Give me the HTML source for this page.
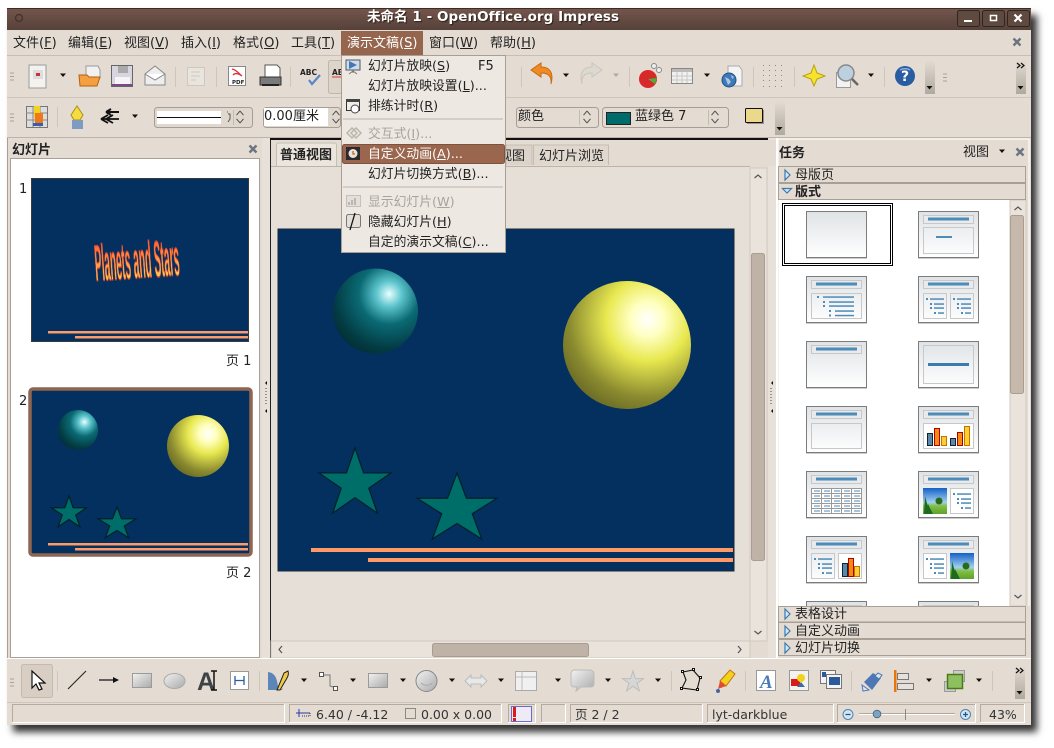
<!DOCTYPE html>
<html><head><meta charset="utf-8"><style>
html,body{margin:0;padding:0;background:#fff;width:1054px;height:748px;overflow:hidden}
#w{position:absolute;left:7px;top:8px;width:1024px;height:717px;box-shadow:6px 7px 7px rgba(0,0,0,.8)}
svg{position:absolute;left:0;top:0}
.t{position:absolute;white-space:nowrap;font:13px/16px "DejaVu Sans","WenQuanYi Zen Hei","Noto Sans CJK SC",sans-serif;color:#222;margin-top:2px}
.b{font-weight:bold}.g{color:#aaa39a}.s{font-size:12.5px;color:#333;margin-top:1px}
</style></head><body><div id="w"></div>
<svg width="1054" height="748" viewBox="0 0 1054 748">
<defs>
<linearGradient id="tb" x1="0" y1="0" x2="0" y2="1"><stop offset="0" stop-color="#74544a"/><stop offset="1" stop-color="#55423a"/></linearGradient>
<linearGradient id="bar" x1="0" y1="0" x2="0" y2="1"><stop offset="0" stop-color="#e4dcd3"/><stop offset="1" stop-color="#b0a9a0"/></linearGradient>
<linearGradient id="th" x1="0" y1="0" x2="0" y2="1"><stop offset="0" stop-color="#dfe3e6"/><stop offset=".65" stop-color="#f4f5f6"/><stop offset="1" stop-color="#fff"/></linearGradient>
<linearGradient id="gr" x1="0" y1="0" x2="1" y2="1"><stop offset="0" stop-color="#f2f2f2"/><stop offset="1" stop-color="#aaa"/></linearGradient>
<linearGradient id="pl" x1="0" y1="0" x2="0" y2="1"><stop offset="0" stop-color="#ff4a30"/><stop offset="1" stop-color="#ffe860"/></linearGradient>
<linearGradient id="sky" x1="0" y1="0" x2="0" y2="1"><stop offset="0" stop-color="#1560c8"/><stop offset=".55" stop-color="#a0d0f0"/><stop offset=".7" stop-color="#80c040"/><stop offset="1" stop-color="#60a030"/></linearGradient>
<radialGradient id="s1" cx=".66" cy=".3" r=".85"><stop offset="0" stop-color="#e8ffff"/><stop offset=".18" stop-color="#5cc4cc"/><stop offset=".42" stop-color="#0a6a74"/><stop offset=".75" stop-color="#033c44"/><stop offset="1" stop-color="#02282c"/></radialGradient>
<radialGradient id="s2" cx=".66" cy=".3" r=".85"><stop offset="0" stop-color="#fff"/><stop offset=".16" stop-color="#ffffc0"/><stop offset=".38" stop-color="#e8e850"/><stop offset=".72" stop-color="#8a8a30"/><stop offset="1" stop-color="#5a5a20"/></radialGradient>
<polygon id="star" points="0,-1 .2245,-.309 .951,-.309 .363,.118 .588,.809 0,.382 -.588,.809 -.363,.118 -.951,-.309 -.2245,-.309" fill="#006e68" stroke="#02202a" stroke-width="1.2" vector-effect="non-scaling-stroke"/>
<g id="base"><rect x="0" y="47" width="61" height="1" fill="#ccc"/><rect x=".5" y=".5" width="60" height="46" fill="url(#th)" stroke="#7c7c7c"/></g>
<g id="ti"><use href="#base"/><rect x="5.5" y="4.5" width="50" height="8" fill="#e8eaec" stroke="#c8c8c8"/><rect x="10" y="6.5" width="41" height="3" fill="#4d8bb8"/></g>
<g id="lst" fill="#4d8bb8"><rect x="0" y="0" width="2" height="2"/><rect x="4" y=".3" width="14" height="1.5"/><rect x="4" y="5" width="2" height="2"/><rect x="8" y="5.3" width="10" height="1.5"/><rect x="4" y="9" width="2" height="2"/><rect x="8" y="9.300" width="10" height="1.5"/><rect x="8" y="14" width="2" height="2"/><rect x="12" y="14.300" width="6" height="1.5"/></g>
<g id="ch"><rect x=".5" y="5.5" width="5" height="13" fill="#5b88a8" stroke="#123"/><rect x="6.5" y=".5" width="5" height="18" fill="#f58a10" stroke="#a00"/><rect x="12.500" y="8.500" width="5" height="10" fill="#fc3" stroke="#b70"/></g>
<g id="pic"><rect width="24" height="26" fill="url(#sky)"/><circle cx="16" cy="13" r="3.5" fill="#2a6a18"/><path d="M2 8L7 26H1zM5 16l5 10H3z" fill="#1d6a22"/></g>
<g id="x"><path d="M-3.5-3.5L3.5 3.5M3.5-3.5L-3.5 3.5" stroke="#6c7480" stroke-width="2.4" fill="none"/></g>
<path id="dd" d="M-3-1.5H3L0 2z" fill="#111"/>
<path id="ud" d="M-3-1.5H3L0 2z" fill="#aaa"/>
<g id="sp"><path d="M0-6L3.500-1.800M0-6L-3.500-1.800M0 6L3.500 1.800M0 6L-3.500 1.800" stroke="#555" fill="none"/></g>
<g id="grip"><path d="M0 0h4M0 3.500h4M0 7h4" stroke="#aaa198"/></g>
<g id="tri"><path d="M0 0L5 5L0 10z" fill="#d6e8f5" stroke="#3d79ad" stroke-width="1.200"/></g>
</defs>

<!-- window -->
<rect x="7" y="8" width="1024" height="717" fill="#e4dcd3"/>
<rect x="7" y="8" width="1024" height="1" fill="#3a2c26"/>
<rect x="7" y="9" width="1024" height="21" fill="url(#tb)"/>
<circle cx="19" cy="18" r="3.500" fill="none" stroke="#3f322c" stroke-width="1.200"/>
<g><rect x="957.500" y="10.500" width="22" height="16" rx="2" fill="#5f4a40" stroke="#2f2520"/><rect x="982.500" y="10.500" width="22" height="16" rx="2" fill="#5f4a40" stroke="#2f2520"/><rect x="1007.500" y="10.500" width="22" height="16" rx="2" fill="#5f4a40" stroke="#2f2520"/></g>
<rect x="964" y="20" width="8" height="2" fill="#fff"/>
<rect x="990.500" y="15.500" width="6" height="5" fill="none" stroke="#fff" stroke-width="1.500"/>
<path d="M1014.500 14.500l7 7M1021.500 14.500l-7 7" stroke="#fff" stroke-width="2.200"/>
<rect x="7" y="55" width="1024" height="1" fill="#c8bfb4"/>
<rect x="7" y="97" width="1024" height="1" fill="#cfc6bb"/>
<rect x="7" y="137" width="1024" height="1" fill="#bdb4a9"/>
<use href="#x" x="1017" y="42"/>
<rect x="341" y="31" width="82" height="24" fill="#96654d"/>

<!-- toolbar 1 -->
<use href="#grip" x="10" y="73"/>
<rect x="29" y="65" width="17" height="23" fill="#f4f2ef" stroke="#9a9a9a"/><rect x="33" y="70" width="10" height="9" fill="#ddd"/><rect x="36" y="73" width="4" height="3" fill="#c33"/>
<use href="#dd" x="63" y="75"/>
<path d="M86 66h12l2 4v8H86z" fill="#f2f2f2" stroke="#999"/><path d="M79 75h8l2 2h11l-3 9H80z" fill="#f5a040" stroke="#b4600c"/>
<rect x="111.500" y="65.500" width="21" height="21" fill="#d8d4e0" stroke="#666"/><rect x="118" y="66" width="10" height="7" fill="#aaa"/><rect x="115" y="77" width="15" height="7" fill="#f6f4f6"/><rect x="112" y="84" width="20" height="2" fill="#7a4a88"/>
<path d="M145 74l10-8 10 8v11h-20z" fill="#eee" stroke="#888"/><path d="M145 74l10 6 10-6" fill="#fff" stroke="#888"/>
<rect x="175" y="67" width="1" height="20" fill="#cfc6bb"/>
<rect x="187.500" y="67.500" width="17" height="18" fill="#e8e4de" stroke="#cfc8be"/><path d="M191 72h9M191 76h9M191 80h5" stroke="#cfc8be"/>
<rect x="216" y="67" width="1" height="20" fill="#cfc6bb"/>
<rect x="228.500" y="66.500" width="17" height="19" fill="#fff" stroke="#888"/><path d="M232 69c5 1 7 5 10 7c-4-3-7-3-9-1" fill="none" stroke="#d33" stroke-width="1.300"/>
<text x="232" y="84" style="font:bold 5.500px 'DejaVu Sans',sans-serif" fill="#222">PDF</text>
<path d="M265 65h12l3 3v9h-15z" fill="#fff" stroke="#555"/><path d="M260 77h21v8h-21z" fill="#7a7a7a" stroke="#333"/><rect x="262" y="84" width="17" height="2" fill="#222"/>
<rect x="290" y="67" width="1" height="20" fill="#cfc6bb"/>
<text x="300" y="75" style="font:bold 7.500px 'DejaVu Sans',sans-serif" fill="#222">ABC</text><path d="M309 80l3 4 8-9" fill="none" stroke="#5a86c6" stroke-width="2.200"/>
<rect x="328.500" y="60.500" width="20" height="33" rx="2" fill="#ddd4ca" stroke="#c0b6aa"/>
<text x="332" y="75" style="font:bold 7.500px 'DejaVu Sans',sans-serif" fill="#222">AB</text><path d="M332 77h9" stroke="#d33"/>
<rect x="521" y="67" width="1" height="20" fill="#cfc6bb"/>
<path d="M551 84c1-8-3-11-10-11v4l-10-7 10-7v4c9 0 13 6 10 17z" fill="#f08a24" stroke="#c86a10"/>
<use href="#dd" x="566" y="75"/>
<path d="M582 84c-1-8 3-11 10-11v4l10-7-10-7v4c-9 0-13 6-10 17z" fill="#dcd8d2" stroke="#cbc5bd"/>
<use href="#ud" x="616" y="75"/>
<rect x="629" y="67" width="1" height="20" fill="#cfc6bb"/>
<circle cx="648" cy="79" r="9" fill="#d9282a"/><path d="M648 79l9-1 -2 6z" fill="#4cb034"/><circle cx="654" cy="66" r="2.500" fill="#eee" stroke="#888"/><circle cx="659" cy="70" r="2.500" fill="#eee" stroke="#888"/>
<rect x="671.500" y="68.500" width="21" height="15" fill="#f3f1ee" stroke="#888"/><rect x="672" y="69" width="20" height="3" fill="#bbb"/><path d="M672 76h20M672 80h20M677 72v11M682 72v11M687 72v11" stroke="#c8c8c8"/>
<use href="#dd" x="707" y="75"/>
<path d="M728 66h11l3 4v16h-14z" fill="#f4f4f4" stroke="#aaa"/><circle cx="729" cy="80" r="7" fill="#3f79b8" stroke="#254f85"/><path d="M725 77l4 2 2 3-3 3zM731 75l3 2-2 2z" fill="#a8c8e4"/>
<rect x="753" y="67" width="1" height="20" fill="#cfc6bb"/>
<g fill="#8a8a8a"><rect x="763" y="65" width="1" height="1"/><rect x="769" y="65" width="1" height="1"/><rect x="775" y="65" width="1" height="1"/><rect x="781" y="65" width="1" height="1"/><rect x="763" y="70" width="1" height="1"/><rect x="769" y="70" width="1" height="1"/><rect x="775" y="70" width="1" height="1"/><rect x="781" y="70" width="1" height="1"/><rect x="763" y="75" width="1" height="1"/><rect x="769" y="75" width="1" height="1"/><rect x="775" y="75" width="1" height="1"/><rect x="781" y="75" width="1" height="1"/><rect x="763" y="80" width="1" height="1"/><rect x="769" y="80" width="1" height="1"/><rect x="775" y="80" width="1" height="1"/><rect x="781" y="80" width="1" height="1"/><rect x="763" y="86" width="1" height="1"/><rect x="769" y="86" width="1" height="1"/><rect x="775" y="86" width="1" height="1"/><rect x="781" y="86" width="1" height="1"/></g>
<rect x="794" y="67" width="1" height="20" fill="#cfc6bb"/>
<path d="M814 65l3 8 8 3-8 3-3 7-3-7-8-3 8-3z" fill="#f6e32c" stroke="#b8a010"/>
<rect x="836.500" y="72.500" width="14" height="15" fill="#f2f2f2" stroke="#999"/><circle cx="846" cy="73" r="8" fill="#bcd0e0" stroke="#888" stroke-width="1.500"/><path d="M852 79l6 6" stroke="#666" stroke-width="2.500"/>
<use href="#dd" x="871" y="75"/>
<rect x="884" y="67" width="1" height="20" fill="#cfc6bb"/>
<circle cx="905" cy="76" r="10" fill="#2a5ca2"/><path d="M900 70a8 6 0 0 1 10 0" stroke="#8fb0d8" fill="none" stroke-width="1.500"/>
<text x="901" y="81" style="font:bold 14px 'DejaVu Sans',sans-serif" fill="#fff">?</text>
<rect x="925" y="60" width="10" height="34" fill="url(#bar)"/><use href="#dd" x="929.500" y="87.500"/>
<use href="#grip" x="943" y="74"/>
<rect x="1016" y="60" width="10" height="34" fill="url(#bar)"/><use href="#dd" x="1020.500" y="87.500"/>
<path d="M1017 63l3 2.500-3 2.500M1021 63l3 2.500-3 2.500" stroke="#111" fill="none" stroke-width="1.200"/>

<!-- toolbar 2 -->
<use href="#grip" x="10" y="114"/>
<rect x="26.500" y="106.500" width="21" height="21" fill="#ddd" stroke="#777"/><path d="M33 106v21M40 106v21M26 113h21M26 120h21" stroke="#888"/><rect x="34" y="106" width="6" height="12" fill="#f3d21c"/><path d="M35 113h8v10h-8z" fill="#f07818"/><rect x="33" y="123" width="10" height="3" fill="#3a5fa8"/>
<rect x="57" y="107" width="1" height="20" fill="#cfc6bb"/>
<path d="M77 106l6 9-3 5h-6l-3-5z" fill="#f5dc40" stroke="#aa9010"/><rect x="72" y="120" width="11" height="9" fill="#7d9cc0"/>
<path d="M119 112h-13M106 112l5-3M106 112l5 3" stroke="#111" stroke-width="2" fill="none"/><path d="M101 119h18M101 119l7-4M101 119l7 4M106 119l7-4M106 119l7 4" stroke="#111" stroke-width="1.800" fill="none"/>
<use href="#dd" x="135" y="116"/>
<rect x="154.500" y="107.500" width="98" height="20" rx="3" fill="#e0d8ce" stroke="#a69e94"/><rect x="157" y="111" width="64" height="13" fill="#fff"/><rect x="157" y="117" width="64" height="1" fill="#111"/><path d="M233.500 110v15" stroke="#c4bbb0"/><path d="M228 114h2v5l-2 3M227 112h1" stroke="#555" fill="none"/><use href="#sp" x="240" y="117"/>
<rect x="263.500" y="107.500" width="77" height="20" rx="3" fill="#e0d8ce" stroke="#a69e94"/><rect x="264" y="108" width="64" height="18" fill="#fff"/><use href="#sp" x="336" y="117"/>
<rect x="516.500" y="107.500" width="82" height="20" rx="3" fill="#e4dcd3" stroke="#a69e94"/><path d="M579.500 110v15" stroke="#c4bbb0"/><use href="#sp" x="587" y="117"/>
<rect x="602.500" y="107.500" width="126" height="20" rx="3" fill="#e4dcd3" stroke="#a69e94"/><rect x="606.500" y="112.500" width="24" height="12" fill="#006b6b" stroke="#222"/><path d="M708.500 110v15" stroke="#c4bbb0"/><use href="#sp" x="715" y="117"/>
<rect x="747" y="110" width="17" height="14" fill="#9a9188"/><rect x="745.500" y="108.500" width="17" height="14" rx="1" fill="#ecd88a" stroke="#111"/>
<rect x="775" y="101" width="10" height="34" fill="url(#bar)"/><use href="#dd" x="779.500" y="128.500"/>

<!-- main bg -->
<rect x="8" y="138" width="1022" height="520" fill="#e4dcd3"/>
<rect x="10.500" y="158.500" width="249" height="499" fill="#fff" stroke="#a8a096"/>
<use href="#x" x="253" y="149"/>
<rect x="7" y="138" width="1" height="520" fill="#a8a096"/>
<rect x="263" y="138" width="1" height="520" fill="#a8a096"/>
<rect x="262" y="138" width="8" height="520" fill="#e8e1d9"/>
<rect x="270" y="138" width="1" height="520" fill="#222"/>
<rect x="270" y="138" width="507" height="2" fill="#111"/>
<path d="M265 383l2-2v4zM265 411l2-2v4z" fill="#111"/><path d="M266 388v18" stroke="#444" stroke-dasharray="1 2"/>
<rect x="776" y="138" width="2" height="520" fill="#fff"/>
<rect x="768" y="138" width="8" height="520" fill="#e8e1d9"/>
<path d="M771 383l2-2v4zM771 411l2-2v4z" fill="#111"/><path d="M771 388v18" stroke="#444" stroke-dasharray="1 2"/>

<!-- thumbs -->
<rect x="31.500" y="178.500" width="217" height="163" fill="#03305f" stroke="#3b3b3b"/>
<rect x="48" y="331" width="200" height="2.500" fill="#ff9966"/><rect x="75" y="336" width="173" height="2.500" fill="#ff9966"/>
<text transform="translate(96,281) rotate(-4) scale(.315,1.600)" style="font:bold 32px 'Liberation Sans',sans-serif" fill="url(#pl)" stroke="#d8402a" stroke-width=".9">Planets and Stars</text>
<rect x="30" y="389" width="221" height="166" rx="3" fill="#03305f" stroke="#8f6552" stroke-width="3.500"/>
<circle cx="78" cy="430" r="20" fill="url(#s1)"/><circle cx="198" cy="446" r="31" fill="url(#s2)"/>
<use href="#star" transform="translate(69,513) scale(18.500,17)"/><use href="#star" transform="translate(117,524) scale(20,17)"/>
<rect x="48" y="543" width="200" height="2.500" fill="#ff9966"/><rect x="75" y="548" width="173" height="2.500" fill="#ff9966"/>

<!-- tabs / editing -->
<rect x="271" y="140" width="505" height="26" fill="#e4dcd3"/>
<rect x="271" y="166" width="479" height="1" fill="#bdb4a9"/>
<path d="M276.500 166V145a2 2 0 0 1 2-2h56a2 2 0 0 1 2 2v21" fill="#ebe5de" stroke="#c6bdb2"/>
<path d="M506 165V145h26v20" fill="#dcd4ca" stroke="#c6bdb2"/><path d="M533.500 165V145h75v20" fill="#e0d8ce" stroke="#c6bdb2"/>
<rect x="271" y="167" width="479" height="474" fill="#e6dfd7"/>
<rect x="278" y="229" width="456" height="342" fill="#03305f" stroke="#1a2a3a"/>
<circle cx="375.500" cy="311" r="42.500" fill="url(#s1)"/>
<circle cx="627" cy="345" r="64" fill="url(#s2)"/>
<use href="#star" transform="translate(355,484) scale(38,36)"/><use href="#star" transform="translate(457,509.500) scale(42,36.500)"/>
<rect x="311" y="548" width="422" height="4" fill="#ff9966"/><rect x="368" y="558" width="365" height="4" fill="#ff9966"/>
<!-- scrollbars -->
<rect x="750" y="168" width="17" height="473" fill="#e9e3dc" stroke="#d2cac0"/>
<path d="M754.500 178l3.500-3 3.500 3M754.500 631l3.500 3 3.500-3" stroke="#555" fill="none" stroke-width="1.200"/>
<rect x="751.500" y="253.500" width="13" height="307" rx="2" fill="#bfb2a6" stroke="#aa9d90"/>
<rect x="271" y="641" width="479" height="17" fill="#e9e3dc" stroke="#d2cac0"/>
<path d="M282 646l-3 3.500 3 3.500M738 646l3 3.500-3 3.500" stroke="#555" fill="none" stroke-width="1.200"/>
<rect x="432.500" y="643.500" width="156" height="13" rx="2" fill="#bfb2a6" stroke="#aa9d90"/>

<!-- task panel -->
<rect x="778" y="139" width="251" height="519" fill="#e4dcd3" stroke="#fff"/>
<use href="#dd" x="1002" y="151"/><use href="#x" x="1020" y="152"/>
<rect x="779" y="200" width="232" height="406" fill="#fff"/>
<use href="#base" x="806" y="211"/>
<rect x="782.500" y="203.500" width="110" height="62" fill="none" stroke="#000"/><rect x="784.500" y="205.500" width="106" height="58" fill="none" stroke="#000"/>
<g transform="translate(918,211)"><use href="#ti"/><rect x="5.500" y="16.500" width="50" height="26" fill="none" stroke="#c8c8c8"/><rect x="18" y="25" width="16" height="2" fill="#4d8bb8"/></g>
<g transform="translate(806,276)"><use href="#ti"/><rect x="5.500" y="17.500" width="50" height="25" fill="none" stroke="#c8c8c8"/><g fill="#4d8bb8"><rect x="11" y="20" width="2" height="2"/><rect x="17" y="20.300" width="31" height="1.500"/><rect x="17" y="25" width="2" height="2"/><rect x="23" y="25.300" width="25" height="1.500"/><rect x="17" y="29" width="2" height="2"/><rect x="23" y="29.300" width="25" height="1.500"/><rect x="23" y="34" width="2" height="2"/><rect x="29" y="34.300" width="19" height="1.500"/><rect x="23" y="38.500" width="2" height="2"/><rect x="29" y="38.800" width="19" height="1.500"/></g></g>
<g transform="translate(918,276)"><use href="#ti"/><rect x="5.500" y="17.500" width="23" height="25" fill="none" stroke="#c8c8c8"/><rect x="32.500" y="17.500" width="23" height="25" fill="none" stroke="#c8c8c8"/><use href="#lst" x="8" y="22"/><use href="#lst" x="35" y="22"/></g>
<use href="#ti" x="806" y="341"/>
<g transform="translate(918,341)"><use href="#base"/><rect x="5.500" y="4.500" width="50" height="38" fill="none" stroke="#c8c8c8"/><rect x="10" y="22" width="41" height="3" fill="#3a7cae"/></g>
<g transform="translate(806,406)"><use href="#ti"/><rect x="5.500" y="17.500" width="50" height="25" fill="none" stroke="#c8c8c8"/></g>
<g transform="translate(918,406)"><use href="#ti"/><rect x="5.500" y="17.500" width="50" height="25" fill="#fff" stroke="#c8c8c8"/>
<rect x="9.500" y="27.500" width="5" height="12" fill="#5b88a8" stroke="#123"/><rect x="16.500" y="22.500" width="5" height="17" fill="#f58a10" stroke="#a00"/><rect x="23.500" y="30.500" width="5" height="9" fill="#fc3" stroke="#b70"/><rect x="32.500" y="32.500" width="5" height="7" fill="#5b88a8" stroke="#123"/><rect x="39.500" y="26.500" width="5" height="13" fill="#f58a10" stroke="#a00"/><rect x="46.500" y="20.500" width="5" height="19" fill="#fc3" stroke="#b70"/></g>
<g transform="translate(806,471)"><use href="#ti"/><rect x="5.500" y="17.500" width="50" height="25" fill="#fff" stroke="#999"/><path d="M5 22.500h50M5 27.500h50M5 32.500h50M5 37.500h50M15.500 17v25M25.500 17v25M35.500 17v25M45.500 17v25" stroke="#999" fill="none"/><path d="M8 20h6M18 20h6M28 20h6M38 20h6M48 20h6M8 25h6M18 25h6M28 25h6M38 25h6M48 25h6M8 30h6M18 30h6M28 30h6M38 30h6M48 30h6M8 35h6M18 35h6M28 35h6M38 35h6M48 35h6M8 40h6M18 40h6M28 40h6M38 40h6M48 40h6" stroke="#4d8bb8"/></g>
<g transform="translate(918,471)"><use href="#ti"/><use href="#pic" x="5" y="17"/><rect x="32.500" y="17.500" width="23" height="25" fill="#fff" stroke="#c8c8c8"/><use href="#lst" x="35" y="22"/></g>
<g transform="translate(806,536)"><use href="#ti"/><rect x="5.500" y="17.500" width="23" height="25" fill="none" stroke="#c8c8c8"/><rect x="32.500" y="17.500" width="23" height="25" fill="#fff" stroke="#c8c8c8"/><use href="#lst" x="8" y="22"/><use href="#ch" x="36" y="22"/></g>
<g transform="translate(918,536)"><use href="#ti"/><rect x="5.500" y="17.500" width="23" height="25" fill="#fff" stroke="#c8c8c8"/><use href="#lst" x="8" y="22"/><use href="#pic" x="32" y="17"/></g>
<use href="#ti" x="806" y="601"/><use href="#ti" x="918" y="601"/>
<rect x="1010" y="200" width="16" height="406" fill="#e9e3dc" stroke="#d2cac0"/>
<path d="M1014.500 210l3.500-3 3.500 3M1014.500 595l3.500 3 3.500-3" stroke="#555" fill="none" stroke-width="1.200"/>
<rect x="1010.500" y="215.500" width="13" height="178" rx="2" fill="#c6b9ac" stroke="#aa9d90"/>
<g fill="#e4dcd3" stroke="#a8a096"><rect x="778.500" y="166.500" width="247" height="16"/><rect x="778.500" y="183.500" width="247" height="16"/></g>
<rect x="778" y="606" width="252" height="52" fill="#e4dcd3"/>
<g fill="#e4dcd3" stroke="#a8a096"><rect x="778.500" y="606.500" width="247" height="15.500"/><rect x="778.500" y="622.500" width="247" height="16"/><rect x="778.500" y="639.500" width="247" height="16"/></g>
<use href="#tri" x="785" y="170"/>
<path d="M782.500 188.500h9l-4.500 4.500z" fill="#d6e8f5" stroke="#3d79ad" stroke-width="1.200"/>
<use href="#tri" x="785" y="609"/><use href="#tri" x="785" y="626"/><use href="#tri" x="785" y="643"/>

<!-- bottom toolbar -->
<rect x="7" y="658" width="1024" height="1" fill="#fff"/>
<rect x="7" y="659" width="1024" height="44" fill="#e4dcd3"/>
<rect x="7" y="702" width="1024" height="1" fill="#cfc6bb"/>
<use href="#grip" x="10" y="679"/>
<rect x="21.500" y="664.500" width="31" height="33" rx="2" fill="#d8cec3" stroke="#c4baad"/>
<path d="M32 671v17l4-4 3 6 3-1-3-6h6z" fill="#fff" stroke="#111" stroke-width="1.200"/>
<rect x="57" y="671" width="1" height="20" fill="#cfc6bb"/>
<path d="M68 689l18-18" stroke="#222" stroke-width="1.100"/>
<path d="M99 680h17" stroke="#111" stroke-width="1.200"/><path d="M113 677l6 3-6 3z" fill="#111"/>
<rect x="132.500" y="673.500" width="19" height="14" fill="url(#gr)" stroke="#9a9a9a"/>
<ellipse cx="174.500" cy="681" rx="10.500" ry="7.500" fill="url(#gr)" stroke="#aaa"/>
<text x="197" y="690" style="font:bold 25px 'Liberation Sans',sans-serif" fill="#3d4347">A</text><path d="M211 671h6M214 671v19M211 690h6" stroke="#111" stroke-width="1.500" fill="none"/>
<rect x="230.500" y="671.500" width="18" height="18" fill="#fff" stroke="#999"/><path d="M235 676v9M244 676v9M235 680.500h9" stroke="#2a5aa0" stroke-width="1.300" fill="none"/>
<rect x="259" y="671" width="1" height="20" fill="#cfc6bb"/>
<path d="M268 672c8 1 9 8 10 14c1 4 3 4 5 2l-1 2h-14z" fill="#5c86b8"/><path d="M277 690l7-17 4-2c1 3 0 5-1 7l-7 12z" fill="#f2c848" stroke="#222"/>
<use href="#dd" x="304" y="680"/>
<path d="M323 675h7v11l7 2" fill="none" stroke="#777"/><rect x="319.500" y="672.500" width="4" height="4" fill="#fff" stroke="#555"/><rect x="333.500" y="686.500" width="4" height="4" fill="#fff" stroke="#555"/>
<use href="#dd" x="353" y="680"/>
<rect x="368.500" y="673.500" width="19" height="14" fill="url(#gr)" stroke="#9a9a9a"/>
<use href="#dd" x="403" y="680"/>
<circle cx="426.500" cy="681" r="10.500" fill="url(#gr)" stroke="#888"/><path d="M421 683c3 3 8 3 11 0" stroke="#aaa" fill="none"/>
<use href="#dd" x="452" y="680"/>
<path d="M465 681l6-6v3h10v-3l6 6-6 6v-3h-10v3z" fill="#e8e8e8" stroke="#bbb"/>
<use href="#dd" x="501" y="680"/>
<rect x="515.500" y="671.500" width="21" height="19" fill="#f0f0f0" stroke="#aaa"/><path d="M522 671v19M515 677h21" stroke="#bbb"/>
<use href="#dd" x="558" y="680"/>
<path d="M574 670h16a4 4 0 0 1 4 4v10a3 3 0 0 1-3 3h-10l-5 4 1-4h-3a3 3 0 0 1-3-3v-10a4 4 0 0 1 3-4z" fill="url(#gr)" stroke="#bbb"/>
<use href="#dd" x="608" y="680"/>
<polygon transform="translate(633,682) scale(11)" points="0,-1 .2245,-.309 .951,-.309 .363,.118 .588,.809 0,.382 -.588,.809 -.363,.118 -.951,-.309 -.2245,-.309" fill="#d6d6d6" stroke="#bdbdbd" stroke-width="1" vector-effect="non-scaling-stroke"/>
<use href="#dd" x="658" y="680"/>
<rect x="671" y="671" width="1" height="20" fill="#cfc6bb"/>
<path d="M683 672l10-2 7 8-3 12-15-2 4-8z" fill="none" stroke="#111" stroke-width="1.100"/>
<g fill="#fff" stroke="#111"><rect x="681.500" y="670.500" width="2" height="2"/><rect x="692.500" y="668.500" width="2" height="2"/><rect x="699.500" y="676.500" width="2" height="2"/><rect x="696.500" y="688.500" width="2" height="2"/><rect x="680.500" y="687.500" width="2" height="2"/></g>
<path d="M720 681l10-11 5 4-9 12z" fill="#f3d21c" stroke="#c87010"/><path d="M720 681l-2 8 8-3z" fill="#e34a32"/><circle cx="718" cy="691" r="2" fill="#3a6aa8"/>
<rect x="745" y="671" width="1" height="20" fill="#cfc6bb"/>
<rect x="756.500" y="670.500" width="19" height="20" fill="#fff" stroke="#999"/>
<text x="760" y="688" style="font:italic bold 19px 'Liberation Serif',serif" fill="#4a7cb4">A</text>
<rect x="789.500" y="670.500" width="19" height="20" fill="#f4f2ef" stroke="#999"/><rect x="791" y="679" width="9" height="7" fill="#d81a1a"/><circle cx="801" cy="678" r="4" fill="#f2d31c"/><path d="M797 687l4-5 4 5z" fill="#3a6aa8"/>
<rect x="820.500" y="670.500" width="15" height="13" fill="#f4f4f4" stroke="#777"/><rect x="826.500" y="674.500" width="15" height="14" fill="#f4f4f4" stroke="#777"/><rect x="829" y="677" width="11" height="8" fill="#2a5a9a"/><rect x="822" y="672" width="4" height="5" fill="#2a5a9a"/>
<rect x="851" y="671" width="1" height="20" fill="#cfc6bb"/>
<path d="M864 682l9-9 8 5-9 12z" fill="#4d78b4"/><path d="M862 685l7 5-6 1zM875 676l3-3 4 2-3 4z" fill="#dbe6f2" stroke="#4d78b4"/>
<rect x="894" y="670" width="2.500" height="22" fill="#e8760a"/><rect x="897.500" y="673.500" width="11" height="6" fill="#e4e2de" stroke="#777"/><rect x="897.500" y="683.500" width="16" height="6" fill="#e4e2de" stroke="#777"/>
<use href="#dd" x="929" y="680"/>
<rect x="953.500" y="670.500" width="11" height="11" fill="#ccc" stroke="#999"/><rect x="944.500" y="681.500" width="11" height="10" fill="#ccc" stroke="#999"/><rect x="947.500" y="674.500" width="15" height="14" fill="#8fc060" stroke="#4a7a18" stroke-width="1.500"/>
<use href="#dd" x="979" y="680"/>
<rect x="992" y="671" width="1" height="20" fill="#cfc6bb"/>
<rect x="1015" y="666" width="10" height="33" fill="url(#bar)"/><use href="#dd" x="1019.500" y="692.500"/>
<path d="M1016 668l3 2.500-3 2.500M1020 668l3 2.500-3 2.500" stroke="#111" fill="none" stroke-width="1.200"/>

<!-- status bar -->
<g fill="#e4dcd3" stroke="#fff"><rect x="12.500" y="704.500" width="272" height="18"/><rect x="289.500" y="704.500" width="212" height="18"/><rect x="508.500" y="704.500" width="27" height="18"/><rect x="541.500" y="704.500" width="24" height="18"/><rect x="570.500" y="704.500" width="132" height="18"/><rect x="707.500" y="704.500" width="126" height="18"/><rect x="837.500" y="704.500" width="138" height="18"/><rect x="980.500" y="704.500" width="44" height="18"/></g>
<g fill="none" stroke="#b4aaa0"><path d="M12.500 722V704.500H284M289.500 722V704.500H501M508.500 722V704.500H535M541.500 722V704.500H565M570.500 722V704.500H702M707.500 722V704.500H833M837.500 722V704.500H975M980.500 722V704.500H1024"/></g>
<path d="M296 713h14M299 709v8" stroke="#2a3aa8"/><path d="M302 716h8v-4" stroke="#333" stroke-dasharray="1 1" fill="none"/>
<rect x="405.500" y="708.500" width="10" height="10" fill="none" stroke="#333" stroke-dasharray="1 1"/>
<rect x="511.500" y="706.500" width="20" height="15" fill="#eeeaf6" stroke="#6a6ad0"/><rect x="513" y="707" width="3" height="10" fill="#e01818"/><rect x="513" y="718" width="3" height="3" fill="#e01818"/>
<circle cx="848" cy="714.500" r="5" fill="#d6e4ef" stroke="#4a86b4"/><path d="M845.500 714.500h5" stroke="#235a8a" stroke-width="1.300"/>
<circle cx="965.500" cy="714.500" r="5" fill="#d6e4ef" stroke="#4a86b4"/><path d="M963 714.500h5M965.500 712v5" stroke="#235a8a" stroke-width="1.300"/>
<path d="M859 713.500h96" stroke="#b0a89e"/><path d="M859 714.500h96" stroke="#fff"/><path d="M905.500 709v11" stroke="#888"/>
<circle cx="877" cy="714" r="3.800" fill="#7fa3c0" stroke="#4a6e8c"/>

<!-- dropdown -->
<rect x="341.500" y="55.500" width="164" height="197" fill="#ede8e2" stroke="#a89e93"/>
<rect x="343" y="118.500" width="160" height="1" fill="#bdb5aa"/>
<rect x="343" y="186.500" width="160" height="1" fill="#bdb5aa"/>
<rect x="342.500" y="144.500" width="162" height="19" rx="2" fill="#9a664d" stroke="#7d5340"/>
<path d="M346 60h14v10h-14z" fill="#cfdcec" stroke="#555"/><path d="M349 61l8 4-8 4z" fill="#3f79b8"/><path d="M353 70v3M349 74l4-3 4 3" stroke="#777" fill="none"/>
<rect x="346.500" y="99.500" width="13" height="11" fill="#f0ece6" stroke="#333"/><rect x="346" y="99" width="14" height="3" fill="#444"/><circle cx="355" cy="109" r="4" fill="#fff" stroke="#444"/>
<path d="M347 133l5-5 5 5-5 5zM351 133l5-5 5 5-5 5z" fill="none" stroke="#bdb5aa" stroke-width="1.500"/>
<rect x="346" y="147" width="14" height="13" fill="#2a2a30"/><circle cx="353" cy="153.500" r="4.500" fill="#e8e4dc"/><path d="M353 151v3h2" stroke="#c86a10" stroke-width="1.300" fill="none"/>
<rect x="346.500" y="195.500" width="14" height="11" fill="#e4dfd8" stroke="#c8c0b6"/><path d="M349 205v-3M352 205v-5M355 205v-7" stroke="#aaa" stroke-width="1.500"/>
<rect x="346.500" y="214.500" width="14" height="13" rx="2" fill="#e4dfd8" stroke="#777"/><path d="M350 230l5-17" stroke="#111" stroke-width="1.300"/>
</svg>

<div class="t b" style="left:367px;top:7px;font-size:13.5px;color:#fff;letter-spacing:.05px;text-shadow:1px 1px 1px #2a1e18">未命名 1 - OpenOffice.org Impress</div>
<div class="t" style="left:13px;top:34px">文件(<u>F</u>)</div>
<div class="t" style="left:68px;top:34px">编辑(<u>E</u>)</div>
<div class="t" style="left:124px;top:34px">视图(<u>V</u>)</div>
<div class="t" style="left:181px;top:34px">插入(<u>I</u>)</div>
<div class="t" style="left:233px;top:34px">格式(<u>O</u>)</div>
<div class="t" style="left:291px;top:34px">工具(<u>T</u>)</div>
<div class="t" style="left:347px;top:34px;color:#fff">演示文稿(<u>S</u>)</div>
<div class="t" style="left:429px;top:34px">窗口(<u>W</u>)</div>
<div class="t" style="left:490px;top:34px">帮助(<u>H</u>)</div>

<div class="t" style="left:368px;top:57px;font-size:12.8px">幻灯片放映(<u>S</u>)</div><div class="t" style="left:478px;top:57px">F5</div>
<div class="t" style="left:368px;top:77px;font-size:12.8px">幻灯片放映设置(<u>L</u>)...</div>
<div class="t" style="left:368px;top:97px;font-size:12.8px">排练计时(<u>R</u>)</div>
<div class="t g" style="left:368px;top:125px;font-size:12.8px">交互式(<u>I</u>)...</div>
<div class="t" style="left:368px;top:145px;font-size:12.8px;color:#fff">自定义动画(<u>A</u>)...</div>
<div class="t" style="left:368px;top:165px;font-size:12.8px">幻灯片切换方式(<u>B</u>)...</div>
<div class="t g" style="left:368px;top:193px;font-size:12.8px">显示幻灯片(<u>W</u>)</div>
<div class="t" style="left:368px;top:213px;font-size:12.8px">隐藏幻灯片(<u>H</u>)</div>
<div class="t" style="left:368px;top:233px;font-size:12.8px">自定的演示文稿(<u>C</u>)...</div>

<div class="t" style="left:264px;top:107px">0.00厘米</div>
<div class="t" style="left:518px;top:107px">颜色</div>
<div class="t" style="left:635px;top:107px">蓝绿色 7</div>

<div class="t b" style="left:12px;top:141px">幻灯片</div>
<div class="t" style="left:19px;top:180px">1</div>
<div class="t" style="left:226px;top:352px">页 1</div>
<div class="t" style="left:19px;top:392px">2</div>
<div class="t" style="left:226px;top:564px">页 2</div>
<div class="t b" style="left:280px;top:146px">普通视图</div>
<div class="t" style="left:506px;top:147px;width:26px;overflow:hidden;text-indent:-7px">视图</div>
<div class="t" style="left:539px;top:147px">幻灯片浏览</div>
<div class="t b" style="left:779px;top:144px">任务</div>
<div class="t" style="left:963px;top:143px">视图</div>
<div class="t" style="left:795px;top:166px">母版页</div>
<div class="t b" style="left:795px;top:183px">版式</div>
<div class="t" style="left:795px;top:605px">表格设计</div>
<div class="t" style="left:795px;top:622px">自定义动画</div>
<div class="t" style="left:795px;top:639px">幻灯片切换</div>
<div class="t s" style="left:316px;top:706px">6.40 / -4.12</div>
<div class="t s" style="left:421px;top:706px">0.00 x 0.00</div>
<div class="t s" style="left:575px;top:706px">页 2 / 2</div>
<div class="t s" style="left:712px;top:706px">lyt-darkblue</div>
<div class="t s" style="left:989px;top:706px">43%</div>
</body></html>
